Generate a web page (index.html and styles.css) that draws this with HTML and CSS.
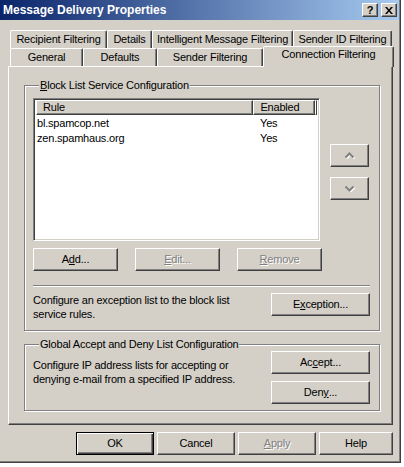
FILE: index.html
```html
<!DOCTYPE html>
<html lang="en">
<head>
    <title>Message Delivery Properties</title>
    <meta charset="utf-8">
    <link rel="stylesheet" href="styles.css">
</head>
<body>
    <div class="window">
        <div class="titlebar">
            <span class="title">Message Delivery Properties</span>
            <div class="caption-btns">
                <div class="cap help">?</div>
                <div class="cap">
                    <svg width="8" height="7" viewBox="0 0 8 7"><path d="M0 0h2l2 2.5 2-2.5h2l-3 3.5 3 3.5h-2l-2-2.5-2 2.5h-2l3-3.5z" fill="#000"/></svg>
                </div>
            </div>
        </div>

        <div class="tabs">
            <div class="tab-row">
                <div class="tab w97">Recipient Filtering</div>
                <div class="tab w45">Details</div>
                <div class="tab w141">Intelligent Message Filtering</div>
                <div class="tab w99">Sender ID Filtering</div>
            </div>
            <div class="tab-row">
                <div class="tab w73">General</div>
                <div class="tab w74">Defaults</div>
                <div class="tab w106">Sender Filtering</div>
                <div class="tab w131 selected">Connection Filtering</div>
            </div>
        </div>

        <div class="panel">
            <fieldset class="group block-list">
                <legend><u>B</u>lock List Service Configuration</legend>
                <div class="list-area">
                    <div class="listview">
                        <div class="lv-header">
                            <div class="lv-col c1">Rule</div>
                            <div class="lv-col c2">Enabled</div>
                            <div class="lv-col c3"></div>
                        </div>
                        <div class="lv-row"><span class="c1">bl.spamcop.net</span><span class="c2">Yes</span></div>
                        <div class="lv-row"><span class="c1">zen.spamhaus.org</span><span class="c2">Yes</span></div>
                    </div>
                    <div class="move-btns">
                        <div class="btn arrow">
                            <svg width="11" height="7" viewBox="0 0 11 7"><polyline points="1.5,5.5 5.5,1.5 9.5,5.5" fill="none" stroke="#fff" stroke-width="2" transform="translate(1 1)"/><polyline points="1.5,5.5 5.5,1.5 9.5,5.5" fill="none" stroke="#808080" stroke-width="2"/></svg>
                        </div>
                        <div class="btn arrow">
                            <svg width="11" height="7" viewBox="0 0 11 7"><polyline points="1.5,1.5 5.5,5.5 9.5,1.5" fill="none" stroke="#fff" stroke-width="2" transform="translate(1 1)"/><polyline points="1.5,1.5 5.5,5.5 9.5,1.5" fill="none" stroke="#808080" stroke-width="2"/></svg>
                        </div>
                    </div>
                </div>
                <div class="btn-row">
                    <div class="btn w85">A<u>d</u>d...</div>
                    <div class="btn w85 disabled"><u>E</u>dit...</div>
                    <div class="btn w85 disabled"><u>R</u>emove</div>
                </div>
                <div class="separator"></div>
                <div class="note-row">
                    <p>Configure an exception list to the block list service rules.</p>
                    <div class="btn w99">E<u>x</u>ception...</div>
                </div>
            </fieldset>

            <fieldset class="group accept-deny">
                <legend>Global Accept and Deny List Configuration</legend>
                <div class="note-row">
                    <p>Configure IP address lists for accepting or denying e-mail from a specified IP address.</p>
                    <div class="btn-col">
                        <div class="btn w99">Ac<u>c</u>ept...</div>
                        <div class="btn w99">Den<u>y</u>...</div>
                    </div>
                </div>
            </fieldset>
        </div>

        <div class="dialog-btns">
            <div class="btn default w78">OK</div>
            <div class="btn w78">Cancel</div>
            <div class="btn w78 disabled"><u>A</u>pply</div>
            <div class="btn w74">Help</div>
        </div>
    </div>
</body>
</html>
```

FILE: styles.css
```css
* { margin: 0; padding: 0; box-sizing: border-box; }
body {
    background: #fff; color: #000;
    font-family: 'Liberation Sans', Arial, sans-serif; font-size: 11px;
    letter-spacing: -0.2px;
}
.window {
    width: 401px; height: 463px; background: #d4d0c8;
    border-right: 1px solid #404040; border-bottom: 1px solid #404040;
    box-shadow: inset -1px -1px 0 #808080;
    display: flex; flex-direction: column;
}

/* title bar */
.titlebar {
    height: 20px; margin-right: 1px; padding: 0 2px 0 3px;
    background: linear-gradient(to right, #0a246a, #a6caf0);
    display: flex; align-items: center; justify-content: space-between;
}
.title { color: #fff; font-weight: bold; font-size: 12px; letter-spacing: 0; }
.caption-btns { display: flex; gap: 3px; }
.cap {
    width: 16px; height: 14px; background: #d4d0c8;
    border: 1px solid; border-color: #fff #404040 #404040 #fff;
    box-shadow: inset -1px -1px 0 #808080;
    display: flex; align-items: center; justify-content: center;
}
.cap.help { font-weight: bold; font-size: 11px; line-height: 12px; letter-spacing: 0; }

/* tabs */
.tabs { margin: 10px 0 0 10px; }
.tab-row { display: flex; height: 18px; }
.tab {
    height: 18px; text-align: center; line-height: 16px; white-space: nowrap;
    border: 1px solid; border-bottom: none;
    border-color: #fff #404040 transparent #fff;
    border-radius: 2px 2px 0 0;
    box-shadow: inset -1px 0 0 #808080;
}
.tab.selected {
    position: relative; z-index: 1;
    height: 21px; margin-top: -2px; margin-bottom: -1px; line-height: 15px;
    background: #d4d0c8;
}
.w45 { width: 45px; } .w73 { width: 73px; } .w74 { width: 74px; }
.w78 { width: 78px; } .w85 { width: 85px; } .w97 { width: 97px; }
.w99 { width: 99px; } .w106 { width: 106px; } .w131 { width: 131px; }
.w141 { width: 141px; }

/* property page */
.panel {
    margin-left: 8px; width: 385px; height: 359px;
    padding: 12px 12px 0 15px;
    border: 1px solid; border-color: #fff #404040 #404040 #fff;
    box-shadow: inset -1px -1px 0 #808080;
}
.group {
    border: 1px solid #808080;
    box-shadow: inset 1px 1px 0 #fff, 1px 1px 0 #fff;
    padding: 6px 9px 14px 8px;
}
.group legend { margin-left: 6px; padding: 0 1px; line-height: 13px; background: #d4d0c8; }
.accept-deny { margin-top: 7px; padding-top: 0; padding-bottom: 6px; }

.list-area { display: flex; gap: 10px; }
.listview {
    width: 287px; height: 143px; background: #fff; padding: 1px 2px 2px;
    border: 1px solid; border-color: #808080 #fff #fff #808080;
    box-shadow: inset 1px 1px 0 #404040, inset -1px -1px 0 #d4d0c8;
}
.lv-header { display: flex; height: 15px; margin-bottom: 1px; }
.lv-col {
    background: #d4d0c8; line-height: 13px; padding-left: 6px;
    border: 1px solid; border-color: #fff #404040 #404040 #fff;
    box-shadow: inset -1px -1px 0 #808080;
}
.lv-col.c1 { width: 219px; }
.lv-col.c2 { width: 62px; }
.lv-col.c3 { flex: 1; padding: 0; }
.lv-row { display: flex; line-height: 15px; }
.lv-row .c1 { width: 219px; padding-left: 1px; }
.lv-row .c2 { padding-left: 5px; }

.move-btns { display: flex; flex-direction: column; gap: 10px; margin-top: 46px; }
.arrow { width: 39px; }

.btn {
    height: 23px; background: #d4d0c8; text-align: center; line-height: 21px;
    border: 1px solid; border-color: #fff #404040 #404040 #fff;
    box-shadow: inset -1px -1px 0 #808080;
    display: flex; align-items: center; justify-content: center;
}
.btn.disabled { color: #808080; text-shadow: 1px 1px 0 #fff; }
.btn.default {
    border: 1px solid #000;
    box-shadow: inset 1px 1px 0 #fff, inset -1px -1px 0 #404040, inset -2px -2px 0 #808080;
}
.btn-row { display: flex; gap: 17px; margin-top: 7px; }
.separator {
    height: 2px; margin-top: 14px;
    border-top: 1px solid #808080; border-bottom: 1px solid #fff;
}
.note-row {
    display: flex; justify-content: space-between; align-items: flex-start;
    height: 23px; margin-top: 6px;
}
.note-row p { width: 220px; line-height: 14px; }
.accept-deny .note-row { height: 53px; margin-top: 0; }
.accept-deny .note-row p { width: 225px; margin-top: 7px; }
.btn-col { display: flex; flex-direction: column; gap: 7px; }

.dialog-btns { display: flex; gap: 3px; margin: 7px 0 0 76px; }
```
